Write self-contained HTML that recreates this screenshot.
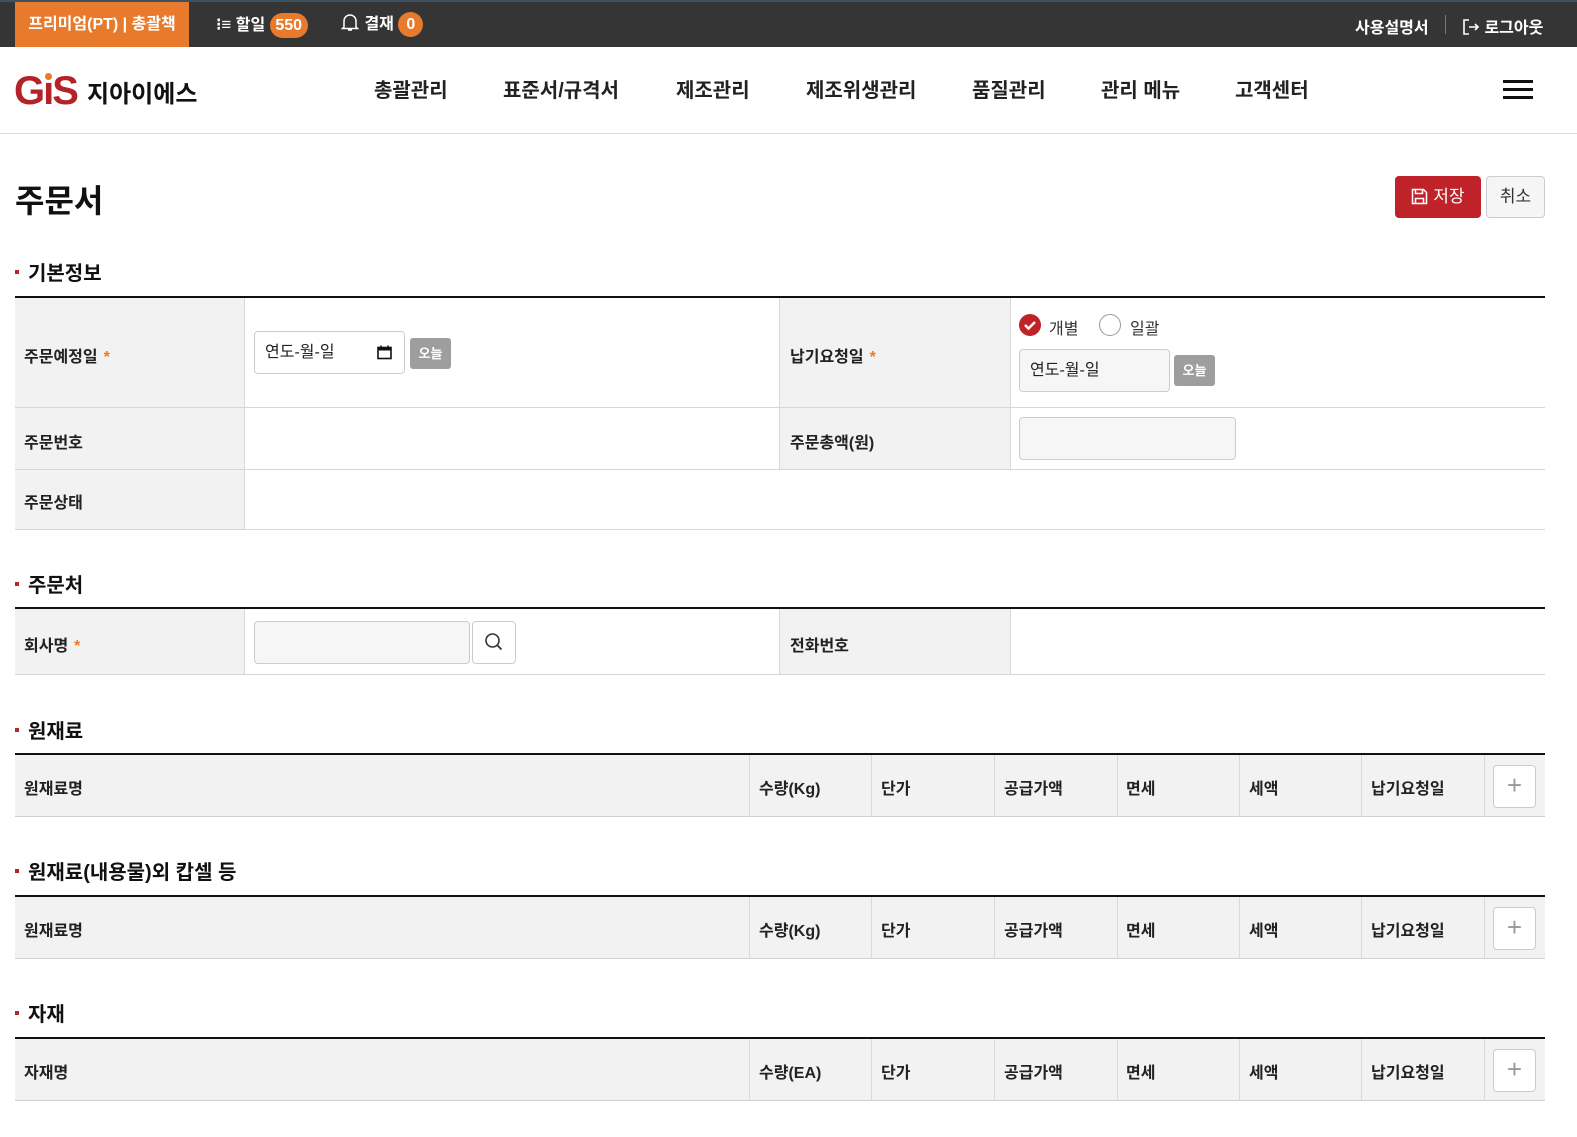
<!DOCTYPE html>
<html><head><meta charset="utf-8">
<style>
*{margin:0;padding:0;box-sizing:border-box}
body{width:1577px;height:1137px;background:#fff;font-family:"Liberation Sans","Noto Sans CJK KR",sans-serif;color:#222;position:relative;overflow:hidden}
.a{position:absolute}
.top{left:0;top:0;width:1577px;height:47px;background:#353535;border-top:2px solid #3d5160}
.tw{color:#fff;font-weight:bold;font-size:16px}
.badge{display:inline-block;background:#e87a2c;color:#fff;border-radius:13px;height:25px;line-height:25px;padding:0 5px;font-size:16px;font-weight:bold;text-align:center;min-width:25px}
.nav{top:74px;font-size:20px;color:#222;font-weight:600}
.sec{font-size:20px;font-weight:bold;color:#111}
.sec:before{content:"";position:absolute;left:-13px;top:13px;width:4px;height:4px;background:#b3262b}
.bl{height:2px;background:#111;left:15px;width:1530px}
.lab{background:#f2f2f2;font-size:16px;font-weight:bold;color:#222}
.hl{border-bottom:1px solid #d6d6d6}
.vl{width:1px;background:#d9d9d9}
.star{color:#e87a2c;margin-left:6px}
.inp{border:1px solid #ccc;border-radius:4px;background:#f6f6f6}
.today{background:#9e9e9e;color:#fff;font-size:13px;font-weight:bold;border-radius:3px;width:41px;height:31px;line-height:31px;text-align:center}
.th{font-size:16px;font-weight:bold;color:#222}
.plus{border:1px solid #ccc;border-radius:4px;width:43px;height:43px;background:#fff;color:#999;font-size:26px;line-height:39px;text-align:center;font-weight:300}
</style></head><body>
<div class="a top"></div>
<div class="a" style="left:15px;top:2px;width:174px;height:45px;background:#e87a2c;color:#fff;font-weight:bold;font-size:16px;line-height:45px;text-align:center">프리미엄(PT) | 총괄책</div>
<div class="a tw" style="left:216px;top:12px;line-height:25px">
<span style="font-size:17px">⁝≡</span> 할일 <span class="badge" style="width:38px;padding:0">550</span></div>
<div class="a tw" style="left:340px;top:12px;line-height:25px">
<svg width="20" height="20" viewBox="0 0 20 20" style="vertical-align:-3px"><path d="M4 15V9a6 6 0 0 1 12 0v6l1.5 1.5h-15z M8 18h4" fill="none" stroke="#fff" stroke-width="1.5"/></svg> 결재 <span class="badge">0</span></div>
<div class="a tw" style="left:1355px;top:14px">사용설명서</div>
<div class="a" style="left:1445px;top:15px;width:1px;height:19px;background:#777"></div>
<div class="a tw" style="left:1462px;top:14px"><svg width="18" height="18" viewBox="0 0 18 18" style="vertical-align:-3px"><path d="M7 2H2v14h5 M7 9h9 M13 6l3 3-3 3" fill="none" stroke="#fff" stroke-width="1.6"/></svg> 로그아웃</div>

<div class="a" style="left:14px;top:70px;font-size:40px;font-weight:900;color:#b52329;letter-spacing:-2px;line-height:42px;font-family:'Liberation Sans',sans-serif">G<span style="position:relative">ı<span style="position:absolute;left:2px;top:4px;width:7px;height:7px;border-radius:50%;background:#e87a2c"></span></span>S</div>
<div class="a" style="left:87px;top:74px;font-size:24px;font-weight:bold;color:#111">지아이에스</div>
<div class="a nav" style="left:374px">총괄관리</div>
<div class="a nav" style="left:503px">표준서/규격서</div>
<div class="a nav" style="left:676px">제조관리</div>
<div class="a nav" style="left:806px">제조위생관리</div>
<div class="a nav" style="left:972px">품질관리</div>
<div class="a nav" style="left:1101px">관리 메뉴</div>
<div class="a nav" style="left:1235px">고객센터</div>
<div class="a" style="left:1503px;top:80px;width:30px;height:3px;background:#111"></div>
<div class="a" style="left:1503px;top:88px;width:30px;height:3px;background:#111"></div>
<div class="a" style="left:1503px;top:96px;width:30px;height:3px;background:#111"></div>
<div class="a" style="left:0;top:133px;width:1577px;height:1px;background:#ddd"></div>

<div class="a" style="left:15px;top:176px;font-size:32px;font-weight:bold;color:#111">주문서</div>
<div class="a" style="left:1395px;top:176px;width:86px;height:42px;background:#c0222a;border-radius:4px;color:#fff;font-size:17px;line-height:42px;text-align:center"><svg width="17" height="17" viewBox="0 0 17 17" style="vertical-align:-3px"><path d="M1.5 1.5h11l3 3v11h-14z M4.5 1.5v4h7v-4 M4.5 15.5v-5h8v5" fill="none" stroke="#fff" stroke-width="1.5"/></svg> 저장</div>
<div class="a" style="left:1486px;top:176px;width:59px;height:42px;background:#f5f5f5;border:1px solid #ccc;border-radius:4px;font-size:17px;line-height:40px;text-align:center;color:#333">취소</div>

<div class="a sec" style="left:28px;top:257px">기본정보</div>
<div class="a bl" style="top:296px"></div>
<div class="a lab" style="left:15px;top:298px;width:229px;height:232px"></div>
<div class="a lab" style="left:779px;top:298px;width:231px;height:172px"></div>
<div class="a vl" style="left:244px;top:298px;height:232px"></div>
<div class="a vl" style="left:779px;top:298px;height:172px"></div>
<div class="a vl" style="left:1010px;top:298px;height:172px"></div>
<div class="a hl" style="left:15px;top:407px;width:1530px"></div>
<div class="a hl" style="left:15px;top:469px;width:1530px"></div>
<div class="a hl" style="left:15px;top:529px;width:1530px"></div>
<div class="a lab" style="left:24px;top:343px;background:none">주문예정일<span class="star">*</span></div>
<div class="a lab" style="left:790px;top:343px;background:none">납기요청일<span class="star">*</span></div>
<div class="a lab" style="left:24px;top:429px;background:none">주문번호</div>
<div class="a lab" style="left:790px;top:429px;background:none">주문총액(원)</div>
<div class="a lab" style="left:24px;top:489px;background:none">주문상태</div>
<div class="a inp" style="left:254px;top:331px;width:151px;height:43px;background:#fff;font-size:16px;line-height:41px;padding-left:10px">연도-월-일
<svg class="a" style="left:122px;top:13px" width="15" height="15" viewBox="0 0 15 15"><rect x="1" y="2.5" width="13" height="11" fill="none" stroke="#111" stroke-width="1.6"/><rect x="1" y="2.5" width="13" height="3" fill="#111"/><path d="M4 0.5v3M11 0.5v3" stroke="#111" stroke-width="1.5"/></svg></div>
<div class="a today" style="left:410px;top:338px">오늘</div>
<div class="a" style="left:1019px;top:314px;width:22px;height:22px;border-radius:50%;background:#c0222a"></div>
<svg class="a" style="left:1019px;top:314px" width="22" height="22" viewBox="0 0 22 22"><path d="M6 11l3.5 3.5L16 8" fill="none" stroke="#fff" stroke-width="2.5"/></svg>
<div class="a" style="left:1049px;top:315px;font-size:16px;color:#333">개별</div>
<div class="a" style="left:1099px;top:314px;width:22px;height:22px;border-radius:50%;border:1px solid #999;background:#fff"></div>
<div class="a" style="left:1130px;top:315px;font-size:16px;color:#333">일괄</div>
<div class="a inp" style="left:1019px;top:349px;width:151px;height:43px;font-size:16px;line-height:41px;padding-left:10px">연도-월-일</div>
<div class="a today" style="left:1174px;top:355px">오늘</div>
<div class="a inp" style="left:1019px;top:417px;width:217px;height:43px"></div>

<div class="a sec" style="left:28px;top:569px">주문처</div>
<div class="a bl" style="top:607px"></div>
<div class="a lab" style="left:15px;top:609px;width:229px;height:66px"></div>
<div class="a lab" style="left:779px;top:609px;width:231px;height:66px"></div>
<div class="a vl" style="left:244px;top:609px;height:66px"></div>
<div class="a vl" style="left:779px;top:609px;height:66px"></div>
<div class="a vl" style="left:1010px;top:609px;height:66px"></div>
<div class="a hl" style="left:15px;top:674px;width:1530px"></div>
<div class="a lab" style="left:24px;top:632px;background:none">회사명<span class="star">*</span></div>
<div class="a lab" style="left:790px;top:632px;background:none">전화번호</div>
<div class="a inp" style="left:254px;top:621px;width:216px;height:43px"></div>
<div class="a" style="left:472px;top:621px;width:44px;height:43px;border:1px solid #ccc;border-radius:4px;background:#fff"></div>
<svg class="a" style="left:484px;top:632px" width="20" height="20" viewBox="0 0 20 20"><circle cx="8.5" cy="8.5" r="6.5" fill="none" stroke="#333" stroke-width="1.6"/><path d="M13.5 13.5l4 4" stroke="#333" stroke-width="1.8"/></svg>

<div id="g"></div>
<script>
var secs=[["원재료",715,753,"원재료명","수량(Kg)"],["원재료(내용물)외 캅셀 등",856,895,"원재료명","수량(Kg)"],["자재",998,1037,"자재명","수량(EA)"]];
var cols=[749,871,994,1117,1239,1361,1484];
var h="";
secs.forEach(function(s){
var t=s[2]+2;
h+='<div class="a sec" style="left:28px;top:'+s[1]+'px">'+s[0]+'</div>';
h+='<div class="a bl" style="top:'+s[2]+'px"></div>';
h+='<div class="a" style="left:15px;top:'+t+'px;width:1530px;height:62px;background:#f2f2f2;border-bottom:1px solid #d0d0d0"></div>';
cols.forEach(function(c){h+='<div class="a vl" style="left:'+c+'px;top:'+t+'px;height:62px"></div>';});
var lbl=[s[3],s[4],"단가","공급가액","면세","세액","납기요청일"];
var xs=[24,759,881,1004,1126,1249,1371];
lbl.forEach(function(l,i){h+='<div class="a th" style="left:'+xs[i]+'px;top:'+(t+20)+'px">'+l+'</div>';});
h+='<div class="a plus" style="left:1493px;top:'+(t+10)+'px">+</div>';
});
document.getElementById("g").innerHTML=h;
</script>
</body></html>
